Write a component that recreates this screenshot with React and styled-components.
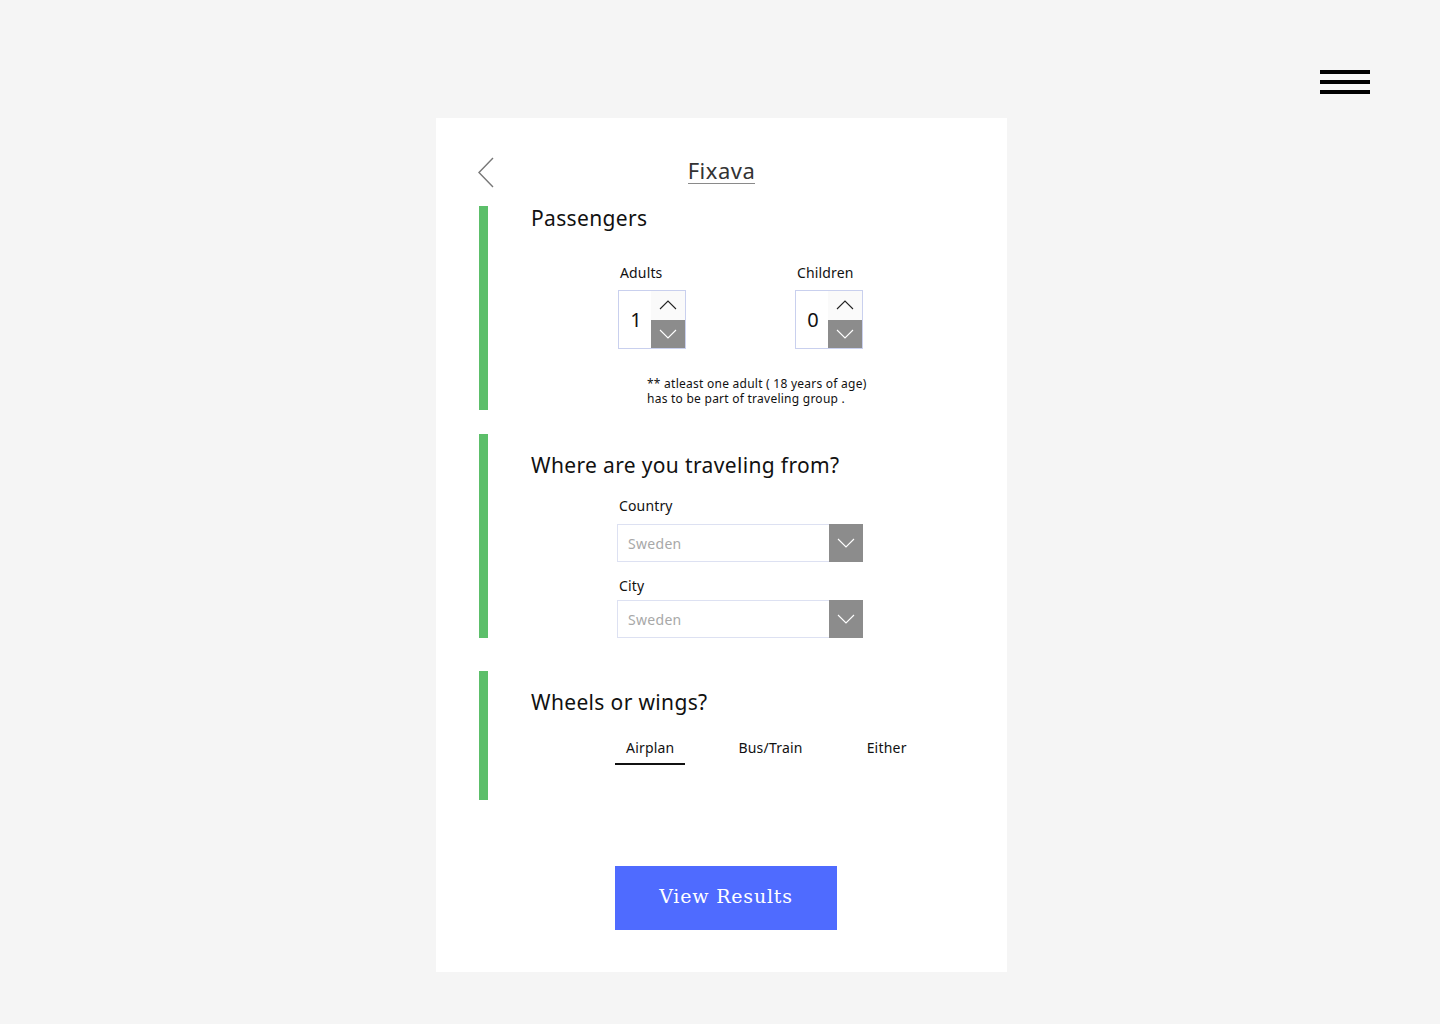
import { useState } from "react";
import styled, { createGlobalStyle } from "styled-components";

const GlobalStyle = createGlobalStyle`
  * { box-sizing: border-box; }
  body {
    margin: 0;
    background: #f5f5f5;
    font-family: "Noto Sans", "DejaVu Sans", sans-serif;
    color: #111;
  }
`;

function Chevron({ dir = "down", color = "#111", size = 18 }) {
  const d = dir === "up" ? "M1 10 L9 2 L17 10" : "M1 2 L9 10 L17 2";
  return (
    <svg width={size} height={12} viewBox="0 0 18 12" fill="none">
      <path d={d} stroke={color} strokeWidth="1.1" />
    </svg>
  );
}

function Stepper({ label, value, onChange }) {
  return (
    <StepperGroup>
      <FieldLabel>{label}</FieldLabel>
      <StepperBox>
        <StepperValue>{value}</StepperValue>
        <StepperButtons>
          <StepButton onClick={() => onChange(value + 1)}>
            <Chevron dir="up" color="#222" />
          </StepButton>
          <StepButton $dark onClick={() => onChange(Math.max(0, value - 1))}>
            <Chevron dir="down" color="#fff" />
          </StepButton>
        </StepperButtons>
      </StepperBox>
    </StepperGroup>
  );
}

function Select({ placeholder }) {
  return (
    <SelectBox>
      <SelectText>{placeholder}</SelectText>
      <SelectArrow>
        <Chevron dir="down" color="#fff" />
      </SelectArrow>
    </SelectBox>
  );
}

export default function App() {
  const [adults, setAdults] = useState(1);
  const [children, setChildren] = useState(0);
  const [mode, setMode] = useState("Airplan");

  return (
    <>
      <GlobalStyle />
      <Page>
        <MenuButton aria-label="menu">
          <span />
          <span />
          <span />
        </MenuButton>

        <Card>
          <Header>
            <BackButton aria-label="back">
              <svg width="16" height="32" viewBox="0 0 16 32" fill="none">
                <path d="M15 1 L1 15.5 L15 30" stroke="#777" strokeWidth="1.4" />
              </svg>
            </BackButton>
            <Brand>Fixava</Brand>
          </Header>

          <Section $top={0} $bottom={4}>
            <Bar />
            <SectionBody>
              <SectionTitle>Passengers</SectionTitle>
              <StepperRow>
                <Stepper label="Adults" value={adults} onChange={setAdults} />
                <Stepper
                  label="Children"
                  value={children}
                  onChange={setChildren}
                />
              </StepperRow>
              <Note>
                ** atleast one adult ( 18 years of age)
                <br />
                has to be part of traveling group .
              </Note>
            </SectionBody>
          </Section>

          <Section $top={19} $bottom={0} $gap={24}>
            <Bar />
            <SectionBody>
              <SectionTitle>Where are you traveling from?</SectionTitle>
              <Fields>
                <FieldLabel $mt={21} $mb={10}>
                  Country
                </FieldLabel>
                <Select placeholder="Sweden" />
                <FieldLabel $mt={16} $mb={6}>
                  City
                </FieldLabel>
                <Select placeholder="Sweden" />
              </Fields>
            </SectionBody>
          </Section>

          <Section $top={19} $bottom={35} $gap={33}>
            <Bar />
            <SectionBody>
              <SectionTitle>Wheels or wings?</SectionTitle>
              <Tabs>
                {["Airplan", "Bus/Train", "Either"].map((t) => (
                  <Tab key={t} $active={mode === t} onClick={() => setMode(t)}>
                    {t}
                  </Tab>
                ))}
              </Tabs>
            </SectionBody>
          </Section>

          <ButtonRow>
            <PrimaryButton>View Results</PrimaryButton>
          </ButtonRow>
        </Card>
      </Page>
    </>
  );
}

const Page = styled.div`
  position: relative;
  min-height: 1024px;
  padding: 118px 0 52px;
`;

const MenuButton = styled.button`
  position: absolute;
  top: 70px;
  right: 70px;
  width: 50px;
  display: flex;
  flex-direction: column;
  gap: 6px;
  padding: 0;
  border: 0;
  background: none;
  cursor: pointer;

  span {
    display: block;
    height: 4px;
    background: #000;
  }
`;

const Card = styled.div`
  width: 571px;
  margin: 0 auto 0 436px;
  background: #fff;
  padding: 39px 43px 42px;
`;

const Header = styled.div`
  position: relative;
  height: 30px;
  display: flex;
  align-items: center;
  justify-content: center;
`;

const BackButton = styled.button`
  position: absolute;
  left: -1px;
  top: 0;
  padding: 0;
  border: 0;
  background: none;
  display: flex;
  cursor: pointer;
`;

const Brand = styled.div`
  font-size: 22px;
  line-height: 26px;
  letter-spacing: 0.5px;
  color: #333;
  border-bottom: 1.5px solid #8a8a8a;
  margin-top: -4px;
`;

const Section = styled.section`
  display: flex;
  margin-top: ${(p) => p.$gap ?? 19}px;

  & > div:last-child {
    padding-top: ${(p) => p.$top}px;
    padding-bottom: ${(p) => p.$bottom}px;
  }
`;

const Bar = styled.div`
  width: 9px;
  flex-shrink: 0;
  background: #5cbf6a;
`;

const SectionBody = styled.div`
  flex: 1;
  margin-left: 43px;
`;

const SectionTitle = styled.h2`
  margin: 0;
  font-size: 21px;
  line-height: 24px;
  font-weight: 400;
  letter-spacing: 0.35px;
  color: #111;
`;

const StepperRow = styled.div`
  display: flex;
  gap: 109px;
  padding-left: 87px;
  margin-top: 35px;
`;

const StepperGroup = styled.div`
  display: flex;
  flex-direction: column;
`;

const FieldLabel = styled.div`
  font-size: 14px;
  line-height: 16px;
  letter-spacing: 0.15px;
  color: #111;
  padding-left: 2px;
  margin-top: ${(p) => p.$mt ?? 0}px;
  margin-bottom: ${(p) => p.$mb ?? 9}px;
`;

const StepperBox = styled.div`
  display: flex;
  width: 68px;
  height: 59px;
  border: 1px solid #c9d0ee;
  background: #fff;
`;

const StepperValue = styled.div`
  flex: 1;
  display: flex;
  align-items: center;
  justify-content: center;
  padding-left: 2px;
  font-size: 20px;
  color: #111;
`;

const StepperButtons = styled.div`
  width: 34px;
  display: flex;
  flex-direction: column;
`;

const StepButton = styled.button`
  flex: 1;
  border: 0;
  padding: 0;
  display: flex;
  align-items: center;
  justify-content: center;
  background: ${(p) => (p.$dark ? "#8c8c8c" : "#fafafa")};
  cursor: pointer;
`;

const Note = styled.p`
  margin: 27px 0 0;
  padding-left: 116px;
  font-size: 12px;
  line-height: 15px;
  letter-spacing: 0.25px;
  color: #111;
`;

const Fields = styled.div`
  display: flex;
  flex-direction: column;
  align-items: flex-start;
  padding-left: 86px;
`;

const SelectBox = styled.div`
  display: flex;
  width: 246px;
  height: 38px;
  border: 1px solid #dde1f2;
  background: #fff;
`;

const SelectText = styled.div`
  flex: 1;
  display: flex;
  align-items: center;
  padding-left: 10px;
  font-size: 14px;
  letter-spacing: 0.3px;
  color: #a8a8a8;
`;

const SelectArrow = styled.div`
  width: 34px;
  margin: -1px -1px -1px 0;
  display: flex;
  align-items: center;
  justify-content: center;
  background: #8c8c8c;
`;

const Tabs = styled.div`
  display: flex;
  gap: 42px;
  padding-left: 84px;
  margin-top: 26px;
`;

const Tab = styled.button`
  border: 0;
  background: none;
  padding: 0 11px 7px;
  font-family: inherit;
  font-size: 14px;
  line-height: 16px;
  letter-spacing: 0.2px;
  color: #111;
  border-bottom: 2px solid ${(p) => (p.$active ? "#111" : "transparent")};
  cursor: pointer;
`;

const ButtonRow = styled.div`
  display: flex;
  padding-left: 136px;
  margin-top: 66px;
`;

const PrimaryButton = styled.button`
  width: 222px;
  height: 64px;
  border: 0;
  padding: 0 0 4px;
  background: #4f6bff;
  color: #fff;
  font-family: "DejaVu Serif", "Liberation Serif", serif;
  font-size: 19px;
  letter-spacing: 0.8px;
  cursor: pointer;
`;
